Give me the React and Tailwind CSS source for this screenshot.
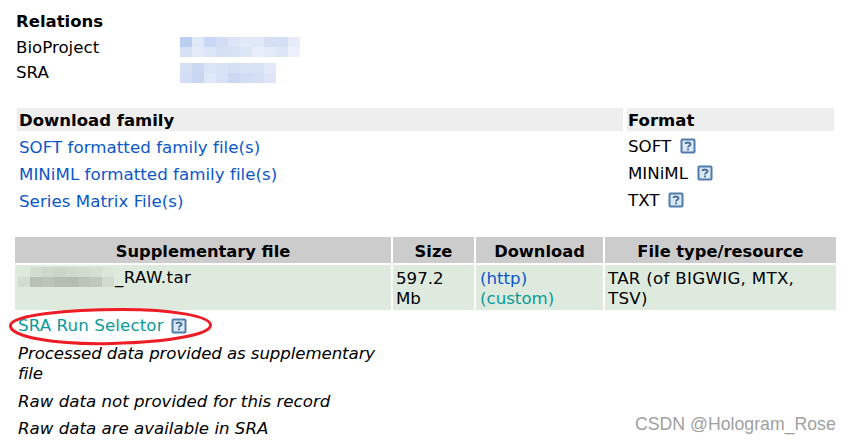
const Help = () => (
  <svg width="16" height="16" viewBox="0 0 16 16" className="inline-block shrink-0 -mt-[2px]">
    <rect x="0.5" y="0.5" width="15" height="15" rx="2" fill="#4f7cab" />
    <rect x="2.5" y="2.5" width="11" height="11" fill="#dbe7f3" />
    <path d="M5.5 6 C5.5 4 10.5 4 10.5 6.2 C10.5 7.8 8 7.6 8 9.5" fill="none" stroke="#3f6a96" strokeWidth="1.8" />
    <rect x="7.1" y="10.5" width="1.8" height="1.8" fill="#3f6a96" />
  </svg>
);

const Mosaic = ({ rows, cell = 12, h = 10 }) => (
  <div className="flex flex-col">
    {rows.map((r, i) => (
      <div key={i} className="flex">
        {r.map((c, j) => (
          <div key={j} style={{ background: c, width: cell, height: h }} />
        ))}
      </div>
    ))}
  </div>
);

const bio = [
  ["#bccff0", "#dfe8f7", "#c8d7f3", "#d3ddf3", "#dbe5f6", "#e0e9f8", "#e0e9f8", "#d5e0f5", "#d3dff5", "#e6edf9"],
  ["#d6e1f5", "#e4ebf8", "#dde6f6", "#d6e0f4", "#d8e2f5", "#dde6f7", "#e7eefa", "#e3eaf8", "#dce5f6", "#ebf0fa"],
];
const sra = [
  ["#d6dff4", "#cbd8f2", "#dbe5f7", "#d9e3f6", "#d5dff4", "#d8e2f5", "#d8e2f5", "#e3e9f8"],
  ["#d3ddf3", "#c9d7f2", "#dfe8f8", "#d7e2f6", "#ccd8f1", "#d3def4", "#d6e0f5", "#dde5f7"],
];
const raw = [
  ["#deeadd", "#d3dcd1", "#cfd8cd", "#ccd5ca", "#d0d9ce", "#d2dbd0", "#d5ded3", "#dbe5da"],
  ["#d3dcd1", "#b9c1b7", "#bcc4ba", "#b6beb3", "#b5bdb2", "#bcc4b9", "#c0c8bd", "#d2dacf"],
];

export default function App() {
  return (
    <div className="relative w-[852px] h-[442px] overflow-hidden bg-white text-[16.65px] text-black font-['DejaVu_Sans','Liberation_Sans',sans-serif] pl-[15px] pt-[10px]">
      <div className="pl-px">
        <div className="font-bold h-[24px] leading-[24px] text-[16.5px]">Relations</div>
        <div className="flex h-[26px] items-center">
          <span className="w-[164px] pt-[2px]">BioProject</span>
          <Mosaic rows={bio} />
        </div>
        <div className="flex h-[25px] items-center">
          <span className="w-[164px] pt-[2px]">SRA</span>
          <Mosaic rows={sra} />
        </div>
      </div>

      <div className="mt-[23px] ml-[2px] w-[817px] grid grid-cols-[606px_207px] gap-x-[4px]">
        <div className="bg-[#eeeeee] h-[23px] font-bold leading-[25px] pl-[2px] text-[16.5px]">Download family</div>
        <div className="bg-[#eeeeee] h-[23px] font-bold leading-[25px] pl-[1px] text-[16.5px]">Format</div>
        {[
          ["SOFT formatted family file(s)", "SOFT"],
          ["MINiML formatted family file(s)", "MINiML"],
          ["Series Matrix File(s)", "TXT"],
        ].map(([a, b]) => (
          <div key={a} className="contents">
            <div className="h-[27px] leading-[33px] pl-[2px] text-[#0b57c9] tracking-[0.04px]">{a}</div>
            <div className="h-[27px] pl-[1px] flex items-center gap-[9px] pt-[5px]">
              <span>{b}</span>
              <Help />
            </div>
          </div>
        ))}
      </div>

      <div className="mt-[25px] w-[821px] grid grid-cols-[376px_81px_127px_231px] gap-x-[2px] gap-y-[2px]">
        {["Supplementary file", "Size", "Download", "File type/resource"].map((t) => (
          <div key={t} className="bg-[#cccccc] h-[26px] leading-[29px] font-bold text-center text-[16.3px]">{t}</div>
        ))}
        <div className="bg-[#deeadd] h-[45px] pl-[3px] pr-[2px] flex items-start pt-[1px]">
          <div className="mt-[1px]"><Mosaic rows={raw} /></div>
          <span className="leading-[24px] ml-px tracking-[0.4px]">_RAW.tar</span>
        </div>
        <div className="bg-[#deeadd] h-[45px] pl-[3px] pr-[6px] pt-[4px] leading-[20px]">597.2 Mb</div>
        <div className="bg-[#deeadd] h-[45px] pl-[4px] pt-[4px] leading-[20px]">
          <div className="text-[#0b57c9]">(http)</div>
          <div className="text-[#0a9a9a]">(custom)</div>
        </div>
        <div className="bg-[#deeadd] h-[45px] pl-[3px] pt-[4px] pr-[12px] leading-[20px] tracking-[0.3px]">TAR (of BIGWIG, MTX, TSV)</div>
      </div>

      <div className="pl-[3px] w-[376px]">
        <div className="flex items-center gap-[7px] h-[32px] text-[#0a9a9a] pt-[1px] tracking-[0.12px]">
          <span>SRA Run Selector</span>
          <Help />
        </div>
        <div className="italic leading-[20px] mt-[2px] tracking-[-0.1px]">Processed data provided as supplementary file</div>
        <div className="italic leading-[20px] mt-[8px]">Raw data not provided for this record</div>
        <div className="italic leading-[20px] mt-[7px]">Raw data are available in SRA</div>
      </div>

      <svg className="absolute left-[7px] top-[306px]" width="208" height="42" viewBox="0 0 208 42">
        <path d="M3.5 19 C6 9 60 3.5 115 3.5 C165 3.5 203 10 203.5 19 C204 28 165 36 105 37.5 C50 39 1 31 3.5 19 Z" fill="none" stroke="#ee1c25" strokeWidth="3" />
      </svg>

      <div className="absolute left-[635px] top-[414px] text-[17.7px] leading-[20px] text-[#a0a0a0] font-['Liberation_Sans',sans-serif]">CSDN @Hologram_Rose</div>
    </div>
  );
}
